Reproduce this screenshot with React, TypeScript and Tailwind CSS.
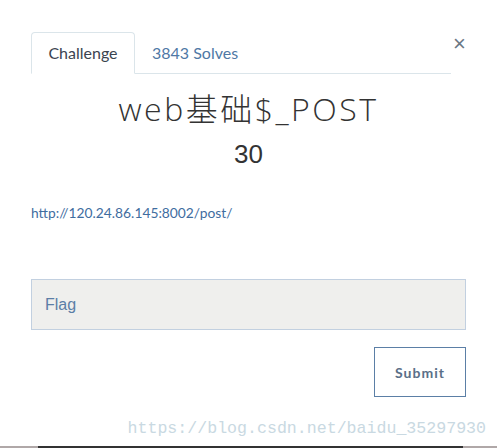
import React from "react";

export default function App() {
  return (
    <div className="relative w-[497px] h-[448px] bg-white overflow-hidden" style={{ fontFamily: "Lato, 'Noto Sans', sans-serif" }}>
      <div className="px-[31px] pt-[32px]">
        <div className="flex items-start">
          <div className="flex w-[420px] border-b border-[#dbe5ea] h-[42px]">
            <div className="w-[104px] h-[42px] border border-[#dbe5ea] border-b-white rounded-t-[4px] bg-white flex items-center justify-center text-[16px] text-[#3b4450] mb-[-1px]">
              Challenge
            </div>
            <div className="pl-[17px] h-[41px] flex items-center text-[16px] text-[#4f78a5]">3843 Solves</div>
          </div>
          <div className="ml-[2px] flex-1 flex justify-center text-[22px] leading-none text-[#6b7785] mt-[1px]" style={{ fontFamily: "'Liberation Sans', sans-serif" }}>
            ×
          </div>
        </div>
        <div className="mt-[15px] text-center text-[32px] leading-[40px] text-[#333] tracking-[2.5px] font-light" style={{ fontFamily: "'Open Sans', 'Noto Sans CJK SC', sans-serif" }}>
          web基础$_POST
        </div>
        <div className="mt-[10px] text-center text-[26px] leading-[30px] text-[#333]" style={{ fontFamily: "'Liberation Sans', sans-serif" }}>
          30
        </div>
        <div className="mt-[36px] text-[13.8px] leading-[16px] text-[#3f6d9f]">http://120.24.86.145:8002/post/</div>
        <div className="mt-[58px] h-[51px] border border-[#c2d0e0] bg-[#efefed] flex items-center pl-[13px] text-[16px] text-[#5b7ea6]" style={{ fontFamily: "'Liberation Sans', sans-serif" }}>
          Flag
        </div>
        <div className="mt-[17px] flex justify-end">
          <div className="w-[92px] h-[50px] border border-[#5b7fa6] flex items-center justify-center text-[14px] font-bold text-[#5a6f88] tracking-[1px]">
            Submit
          </div>
        </div>
      </div>
      <div className="absolute right-[11px] top-[419px] text-[16.6px] leading-[20px] text-[#c9d9e2]" style={{ fontFamily: "'Liberation Mono', monospace" }}>
        https://blog.csdn.net/baidu_35297930
      </div>
      <div className="absolute left-0 right-0 bottom-0 h-[2px] flex">
        <div className="w-[38px] bg-[#b0a8a8]" />
        <div className="flex-1 bg-[#333]" />
        <div className="w-[34px] bg-[#b0a8a8]" />
      </div>
    </div>
  );
}
